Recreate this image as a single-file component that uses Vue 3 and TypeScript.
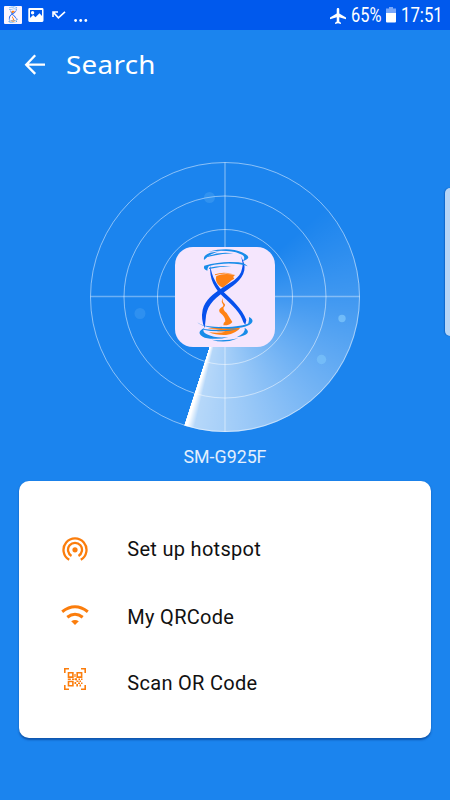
<script setup lang="ts">
interface Action {
  id: 'hotspot' | 'wifi' | 'scan'
  label: string
}

const actions: Action[] = [
  { id: 'hotspot', label: 'Set up hotspot' },
  { id: 'wifi', label: 'My QRCode' },
  { id: 'scan', label: 'Scan OR Code' },
]
const rings: number[] = [67.5, 101, 134.5]
</script>

<template>
  <main class="screen">
    <svg class="symbols" width="0" height="0" aria-hidden="true">
      <symbol id="hourglass" viewBox="30 21 300 300">
        <g fill="#ff8214">
          <path d="M154 108Q176 98 211 105Q201 110 208 116Q199 120 195 125Q184 134 173 143Q163 139 158 132Q150 121 154 108Z" />
          <path d="M150 103Q174 94 202 102Q171 98 150 106Z" />
          <path d="M174 174Q171 185 177 190Q184 195 176 202Q173 210 185 219L202 246Q194 257 175 256Q173 250 181 244Q182 232 164 217Q159 208 171 201Q178 197 173 191Q167 185 174 174Z" />
          <path d="M128 265Q145 260 172 260Q162 264 180 265Q198 262 226 263Q215 279 183 285Q153 286 132 277Q165 280 181 275Q157 275 140 270Q154 269 165 267Q143 268 128 265Z" />
        </g>
        <g fill="#0751ed">
          <path d="M227 47Q242 73 238 91C232 122 200 140 178 156C142 178 124 202 122 238L119 264Q107 238 113 209C120 181 146 160 170 145C194 128 226 116 231 86Q236 69 227 47Z" />
          <path d="M136 76C139 110 158 141 179 159C199 177 232 207 244 240L241 254L235 247C228 220 200 194 176 172C149 147 132 117 136 76Z" />
        </g>
        <g fill="#178ce9">
          <path d="M129 35Q192 20 231 37Q268 53 233 64Q246 49 224 41Q192 28 129 35Z" />
          <path d="M117 60Q112 38 165 34Q131 43 124 54Z" />
          <path d="M127 49Q163 34 205 40Q167 41 127 51Z" />
          <path d="M118 77Q171 62 220 67Q239 69 248 79Q223 69 176 71Q143 73 131 79Q127 84 127 92Q113 87 118 77Z" />
          <path d="M132 83Q163 75 199 79Q165 79 132 87Z" />
          <path d="M97 247Q112 260 148 260C194 264 243 257 250 250Q253 240 252 231Q265 237 262 246Q252 264 191 266Q114 266 97 247Z" />
          <path d="M115 267Q162 274 224 267Q164 279 115 269Z" />
          <path d="M119 263Q104 279 147 290Q166 294 190 291Q157 301 119 293Q88 278 119 263Z" />
          <path d="M239 263Q267 282 215 292Q244 277 239 263Z" />
          <path d="M140 299Q179 304 220 295Q180 312 140 299Z" />
        </g>
      </symbol>
    </svg>

    <header class="status">
      <div class="status-left">
        <span class="mini"><svg width="18" height="18"><use href="#hourglass" /></svg></span>
        <svg class="photo" width="16" height="15" viewBox="0 0 16 15">
          <path fill="#fff" fill-rule="evenodd" d="M1.5 0h12.7Q15.5 0 15.5 1.4v11.2q0 1.4-1.3 1.4H1.5Q.3 14 .3 12.6V1.4Q.3 0 1.5 0ZM2 2v8l3.1-3 2.4 2.3 4-4L14 8V2ZM4.6 3a1.7 1.7 0 1 1 0 3.4 1.7 1.7 0 0 1 0-3.4Z" />
        </svg>
        <svg class="missed" width="14" height="9" viewBox="0 0 14 9" fill="none" stroke="#fff" stroke-width="1.6">
          <path d="M1 6V1h5M1.4 1.4 6.4 6.9 13 .8" />
        </svg>
        <svg class="dots" width="14" height="3" viewBox="0 0 14 3" fill="#fff">
          <circle cx="1.6" cy="1.5" r="1.4" /><circle cx="6.7" cy="1.5" r="1.4" /><circle cx="11.8" cy="1.5" r="1.4" />
        </svg>
      </div>
      <div class="status-right">
        <svg width="16" height="16" viewBox="2 2 19 20" preserveAspectRatio="none">
          <path fill="#fff" d="M21 16v-2l-8-5V3.5C13 2.67 12.33 2 11.5 2S10 2.67 10 3.5V9l-8 5v2l8-2.5V19l-2 1.5V22l3.5-1 3.5 1v-1.5L13 19v-5.5l8 2.5Z" />
        </svg>
        <span class="percent">65%</span>
        <svg class="battery" width="10" height="16" viewBox="0 0 10 16">
          <path fill="#79a7fa" d="M3 0h4v1.5h3v5H0v-5h3Z" /><path fill="#fff" d="M0 6h10v8.5q0 1-1 1H1q-1 0-1-1Z" />
        </svg>
        <span class="time">17:51</span>
      </div>
    </header>

    <nav class="toolbar">
      <svg width="22" height="22" viewBox="0 0 22 22" fill="none" stroke="#fff" stroke-width="2.3">
        <path d="M11.2 1.2 2.2 10.7l9 9.2M2.2 10.7H21" />
      </svg>
      <h1>Search</h1>
    </nav>

    <section class="radar">
      <div class="sweep"></div>
      <svg class="grid" width="270" height="270" viewBox="0 0 270 270">
        <g fill="none" stroke="#fff" stroke-opacity=".55">
          <circle v-for="r in rings" :key="r" cx="135" cy="135" :r="r" stroke-width=".9" />
          <path d="M.5 134.5H269.5M135 .5V269.5" stroke-opacity=".36" stroke-width="1.4" />
        </g>
        <g fill="#7dc5fb">
          <circle cx="119.5" cy="35.5" r="5.5" opacity=".22" />
          <circle cx="50" cy="151.5" r="5.5" opacity=".2" />
          <circle cx="252" cy="156.5" r="3.7" opacity=".75" />
          <circle cx="231.5" cy="197.5" r="4.7" opacity=".65" />
        </g>
      </svg>
      <div class="tile"><svg width="100" height="100"><use href="#hourglass" /></svg></div>
    </section>
    <p class="device">SM-G925F</p>

    <ul class="card">
      <li v-for="a in actions" :key="a.id" :class="a.id">
        <span class="icon">
          <svg v-if="a.id === 'hotspot'" width="26" height="24" viewBox="0 0 26 24" fill="none" stroke="#fb7d0c" stroke-width="2.3">
            <path d="M7.2 22.8A11.5 11.5 0 1 1 18.8 22.8M9.5 18.9A7 7 0 1 1 16.5 18.9" />
            <circle cx="13" cy="12.8" r="2.6" fill="#fb7d0c" stroke="none" />
          </svg>
          <svg v-else-if="a.id === 'wifi'" width="28" height="20" viewBox="0 0 28 20">
            <g fill="none" stroke="#fb7d0c" stroke-width="3">
              <path d="M1.2 6.8Q14-3.2 26.8 6.8M6.3 12.3Q14 6.2 21.7 12.3" />
            </g>
            <path fill="#fb7d0c" d="M10.2 16.2Q14 13.6 17.8 16.2L14 19.9Z" />
          </svg>
          <svg v-else width="22" height="22" viewBox="0 0 22 22" fill="none" stroke="#fb7d0c" stroke-width="1.6">
            <path d="M.8 5V.8H5M17 .8h4.2V5M.8 17v4.2H5M17 21.2h4.2V17" />
            <path d="M4.5 4.8h4.4v4.3H4.5ZM13.2 4.8h4.4v4.3h-4.4ZM4.5 13.5h4.4v4.3H4.5Z" />
            <path fill="#fb7d0c" stroke="none" d="M10.4 6h1.2v3h-1.2ZM3.8 10.5h3V12h-3ZM8 10.5h2.5V12H8ZM11 10.3h2v2h-2ZM14.5 10.5h1.5V12h-1.5ZM17 10.5h1.5V12H17ZM12.5 12.5h2V14h-2ZM15.5 12.5H17V14h-1.5ZM10.5 14h1.7v2h-1.7ZM14 14.5h2V16h-2ZM17 14.5h1.5V16H17ZM12.3 16h1.7v2.5h-1.7ZM15.5 16.5H17v2h-1.5Z" />
          </svg>
        </span>
        <span class="label">{{ a.label }}</span>
      </li>
    </ul>
    <div class="edge-handle"></div>
  </main>
</template>

<style>
body { margin: 0; }
</style>

<style scoped>
.screen { position: relative; width: 450px; height: 800px; overflow: hidden; background: #1b84ee; font-family: Roboto, sans-serif; color: #fff; display: flex; flex-direction: column; }
.symbols { position: absolute; }
.status { height: 30px; flex: none; background: #0059ed; display: flex; justify-content: space-between; }
.status-left, .status-right { display: flex; align-items: flex-start; }
.status-left { padding-left: 4px; }
.mini { width: 18px; height: 18px; margin-top: 6px; background: #fbf4fe; border-radius: 1px; }
.mini svg { display: block; }
.photo { margin: 8px 0 0 6px; }
.missed { margin: 11px 0 0 8px; }
.dots { margin: 19px 0 0 8px; }
.status-right { padding-right: 8px; }
.status-right > svg:first-child { margin-top: 8px; }
.percent, .time { font-size: 19.5px; line-height: 21px; margin-top: 5px; transform-origin: left; white-space: nowrap; }
.percent { width: 31px; margin-left: 5px; transform: scaleX(.84); }
.battery { margin: 7px 0 0 4px; }
.time { width: 41px; margin-left: 5px; transform: scaleX(.86); }
.toolbar { height: 70px; flex: none; display: flex; align-items: center; padding-left: 24px; box-sizing: border-box; }
h1 { margin: 0 0 3px 20px; font: 400 25px/34px "Noto Sans", sans-serif; letter-spacing: .3px; transform: scaleX(1.11); transform-origin: left; }
.radar { display: grid; place-items: center; width: 270px; height: 270px; margin: 62px auto 0; }
.radar > * { grid-area: 1 / 1; }
.sweep { width: 269px; height: 269px; border-radius: 50%; background: conic-gradient(rgba(255,255,255,0) 48deg, rgba(255,255,255,.16) 90deg, rgba(255,255,255,.38) 135deg, rgba(255,255,255,.61) 180deg, rgba(255,255,255,.68) 193.5deg, #fff 196.7deg, #fff 197.8deg, rgba(255,255,255,0) 198deg); }
.tile { width: 100px; height: 100px; border-radius: 18px; background: #f5e6fd; }
.tile svg { display: block; }
.device { margin: 14px 0 0; text-align: center; font-size: 17.8px; line-height: 21px; color: #e3effd; }
.card { width: 412.6px; height: 257px; box-sizing: border-box; margin: 14px 0 0 18.6px; padding: 34px 0 0; list-style: none; background: #fff; border-radius: 10px; box-shadow: 0 1.5px 2px rgba(0,40,110,.5); color: #111; }
.card li { height: 67px; display: flex; align-items: center; }
.card .wifi { height: 69px; }
.card .scan { height: 64px; }
.icon { width: 108.7px; padding-left: 43px; box-sizing: border-box; display: flex; }
.scan .icon { padding-left: 45px; margin-top: -8px; }
.wifi .icon { padding-left: 42px; margin-top: -3px; }
.label { font-size: 20px; line-height: 24px; letter-spacing: .3px; white-space: nowrap; }
.edge-handle { position: absolute; top: 188px; right: -2px; width: 7px; height: 148px; background: #b5d5f7; border-radius: 5px 0 0 5px; box-shadow: -1px 0 1px rgba(0,70,160,.45); }
</style>
